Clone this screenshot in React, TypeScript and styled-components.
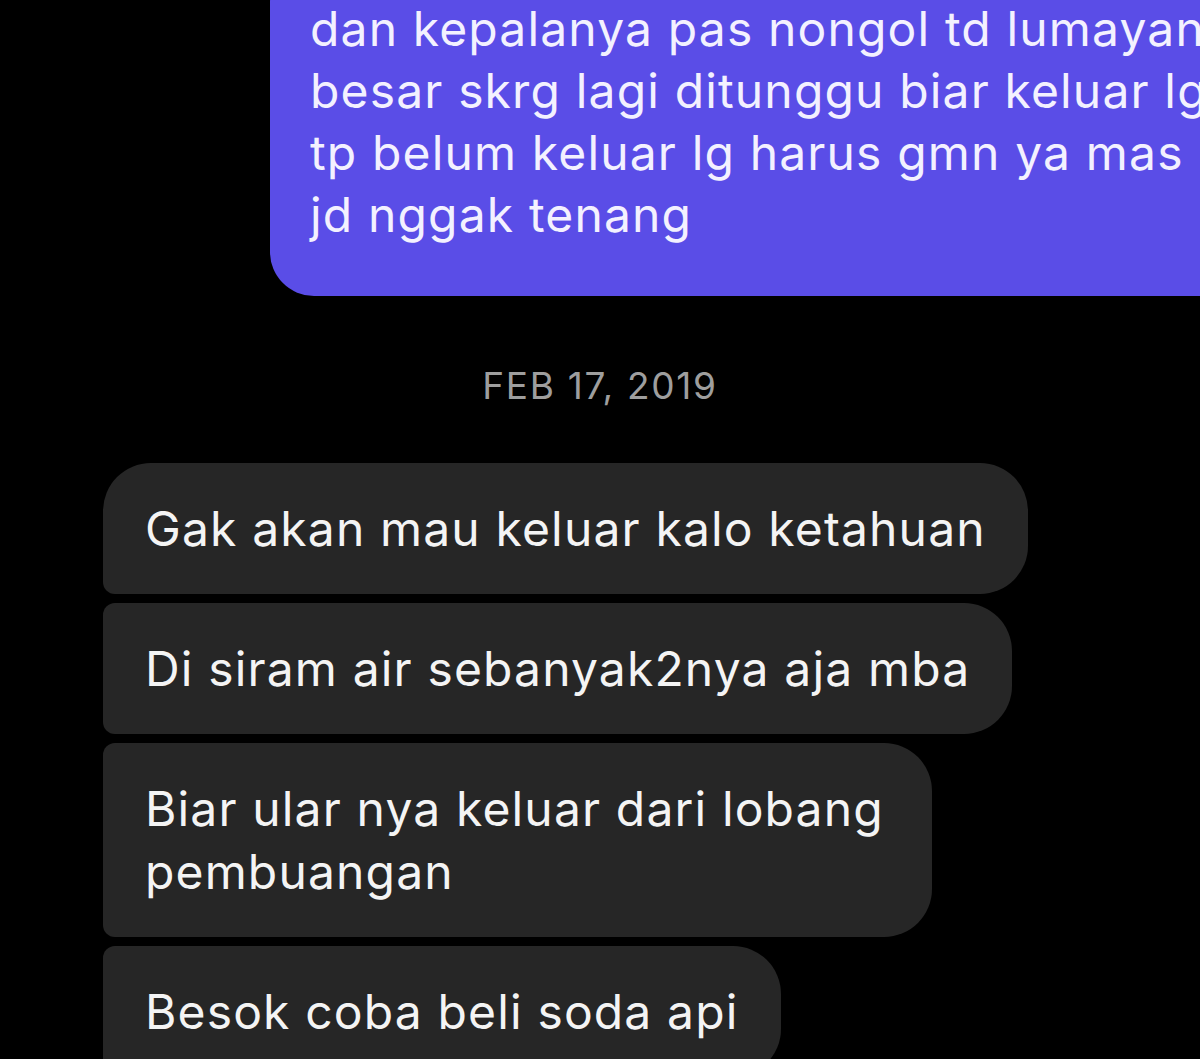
import React from "react";
import styled, { createGlobalStyle } from "styled-components";

const Global = createGlobalStyle`
  html, body {
    margin: 0;
    padding: 0;
    background: #000;
    overflow: hidden;
  }
  * { box-sizing: border-box; }
`;

const Screen = styled.div`
  width: 1200px;
  height: 1059px;
  background: #000;
  overflow: hidden;
  display: flex;
  flex-direction: column;
  font-family: Inter, "Liberation Sans", sans-serif;
  -webkit-font-smoothing: antialiased;
`;

const SentBubble = styled.div`
  align-self: flex-start;
  margin-left: 270px;
  margin-top: -42px;
  width: 1000px;
  padding: 40px 40px 50px 40px;
  background: #5a4de7;
  color: #f3f1ff;
  font-size: 48px;
  line-height: 62px;
  letter-spacing: 1.15px;
  border-radius: 44px 0 0 44px;
  white-space: nowrap;
`;

const Line = styled.div``;

const DateLabel = styled.div`
  margin-top: 68px;
  margin-bottom: 55px;
  text-align: center;
  font-size: 37px;
  line-height: 44px;
  color: #9e9e9e;
  letter-spacing: 1.7px;
`;

const Group = styled.div`
  display: flex;
  flex-direction: column;
  align-items: flex-start;
  gap: 9px;
  padding-left: 103px;
`;

const Bubble = styled.div<{ $first?: boolean; $width?: number }>`
  background: #262626;
  color: #f4f4f4;
  font-size: 48px;
  line-height: 63px;
  letter-spacing: 1.15px;
  padding: 34px 42px;
  border-radius: ${(p) => (p.$first ? "48px" : "12px")} 48px 48px 12px;
  width: ${(p) => (p.$width ? `${p.$width}px` : "auto")};
  white-space: nowrap;
`;

export default function App() {
  return (
    <>
      <Global />
      <Screen>
        <SentBubble>
          <Line>dan kepalanya pas nongol td lumayan</Line>
          <Line>besar skrg lagi ditunggu biar keluar lg</Line>
          <Line>tp belum keluar lg harus gmn ya mas</Line>
          <Line>jd nggak tenang</Line>
        </SentBubble>
        <DateLabel>FEB 17, 2019</DateLabel>
        <Group>
          <Bubble $first>Gak akan mau keluar kalo ketahuan</Bubble>
          <Bubble>Di siram air sebanyak2nya aja mba</Bubble>
          <Bubble $width={829}>
            Biar ular nya keluar dari lobang
            <br />
            pembuangan
          </Bubble>
          <Bubble>Besok coba beli soda api</Bubble>
        </Group>
      </Screen>
    </>
  );
}
